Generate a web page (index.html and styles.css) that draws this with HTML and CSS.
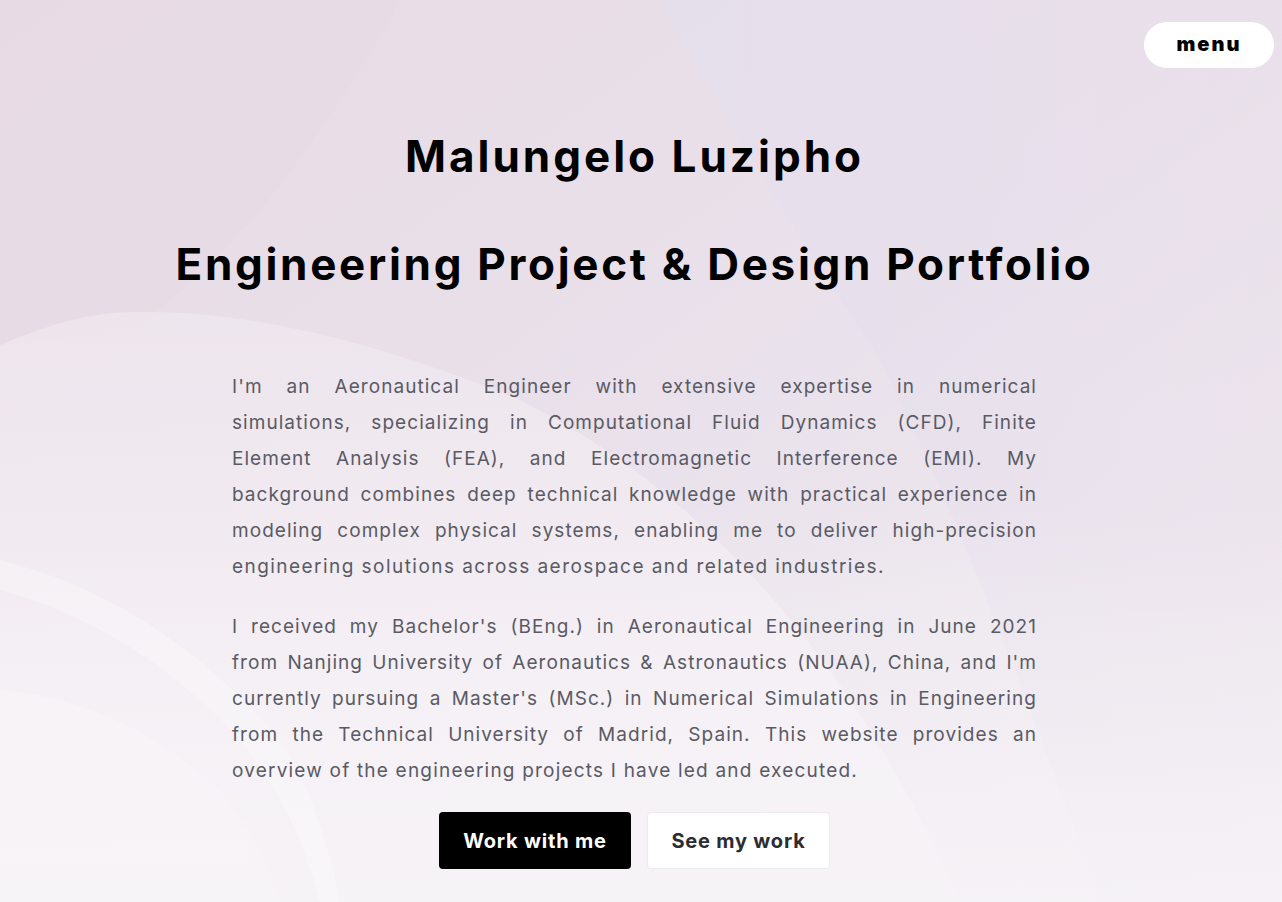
FILE: index.html
```html
<!DOCTYPE html>
<html lang="en">
<head>
<meta charset="utf-8">
<title>Malungelo Luzipho — Portfolio</title>
<link rel="stylesheet" href="styles.css">
</head>
<body>
<div class="page">
  <svg class="bg" viewBox="0 0 1282 902" preserveAspectRatio="none" aria-hidden="true">
    <defs>
      <linearGradient id="base" x1="0" y1="0" x2="1" y2="1">
        <stop offset="0" stop-color="#e8dbe5"/>
        <stop offset="0.5" stop-color="#e9e1eb"/>
        <stop offset="1" stop-color="#f3eef3"/>
      </linearGradient>
      <linearGradient id="tr" x1="0" y1="0" x2="1" y2="0">
        <stop offset="0" stop-color="#e3e0ef" stop-opacity="0.9"/>
        <stop offset="1" stop-color="#e8dde9" stop-opacity="0.7"/>
      </linearGradient>
      <linearGradient id="low" x1="0" y1="0" x2="0" y2="1">
        <stop offset="0" stop-color="#f0e8ef" stop-opacity="0.7"/>
        <stop offset="1" stop-color="#f8f5f8" stop-opacity="0.95"/>
      </linearGradient>
      <linearGradient id="fade" x1="0" y1="0" x2="0" y2="1">
        <stop offset="0" stop-color="#f6f2f6" stop-opacity="0"/>
        <stop offset="1" stop-color="#f6f3f7" stop-opacity="0.9"/>
      </linearGradient>
    </defs>
    <rect width="1282" height="902" fill="url(#base)"/>
    <path d="M400 0 Q340 110 260 210 Q190 290 130 330 L0 345 V0 Z" fill="#e6d9e4" opacity="0.5"/>
    <path d="M660 0 H1282 V902 H1100 Q980 560 880 360 Q740 150 660 0 Z" fill="url(#tr)" opacity="0.55"/>
    <path d="M0 345 Q80 310 140 312 Q300 310 520 400 Q800 540 960 902 H0 Z" fill="url(#low)"/>
    <rect x="0" y="500" width="1282" height="402" fill="url(#fade)"/>
    <path d="M0 690 Q120 700 220 790 Q260 840 280 902 H0 Z" fill="#f8f4f7" opacity="0.7"/>
    <path d="M0 560 Q160 600 280 740 Q320 800 340 902 H320 Q290 780 200 700 Q110 620 0 590 Z" fill="#ffffff" opacity="0.25"/>
  </svg>

  <header class="topbar">
    <button class="menu-btn">menu</button>
  </header>

  <main class="hero">
    <h1 class="name">Malungelo Luzipho</h1>
    <h2 class="title">Engineering Project &amp; Design Portfolio</h2>
    <div class="intro">
      <p>
        <span class="ln">I'm an Aeronautical Engineer with extensive expertise in numerical</span>
        <span class="ln">simulations, specializing in Computational Fluid Dynamics (CFD), Finite</span>
        <span class="ln">Element Analysis (FEA), and Electromagnetic Interference (EMI). My</span>
        <span class="ln">background combines deep technical knowledge with practical experience in</span>
        <span class="ln">modeling complex physical systems, enabling me to deliver high-precision</span>
        <span class="ln last">engineering solutions across aerospace and related industries.</span>
      </p>
      <p>
        <span class="ln">I received my Bachelor's (BEng.) in Aeronautical Engineering in June 2021</span>
        <span class="ln">from Nanjing University of Aeronautics &amp; Astronautics (NUAA), China, and I'm</span>
        <span class="ln">currently pursuing a Master's (MSc.) in Numerical Simulations in Engineering</span>
        <span class="ln">from the Technical University of Madrid, Spain. This website provides an</span>
        <span class="ln last tight">overview of the engineering projects I have led and executed.</span>
      </p>
    </div>
    <div class="actions">
      <a class="btn btn-dark" href="#">Work with me</a>
      <a class="btn btn-light" href="#">See my work</a>
    </div>
  </main>
</div>
</body>
</html>
```

FILE: styles.css
```css
* { box-sizing: border-box; }
html, body { margin: 0; padding: 0; }
body {
  font-family: "Inter", "Liberation Sans", sans-serif;
  color: #000;
  background: #ece3ec;
}
.page {
  position: relative;
  width: 100%;
  min-height: 902px;
  overflow: hidden;
}
.bg {
  position: absolute;
  inset: 0;
  width: 100%;
  height: 100%;
  z-index: 0;
}
.topbar {
  position: relative;
  z-index: 1;
  display: flex;
  justify-content: flex-end;
  padding: 22px 8px 0 0;
}
.menu-btn {
  width: 130px;
  height: 46px;
  border: none;
  border-radius: 23px;
  background: #fff;
  font-family: "Inter", sans-serif;
  font-weight: 900;
  font-size: 20px;
  letter-spacing: 2px;
  color: #000;
  padding: 0 0 3px;
}
.hero {
  position: relative;
  z-index: 1;
  display: flex;
  flex-direction: column;
  align-items: center;
  padding: 60px 13px 0 0;
}
.name, .title {
  margin: 0;
  font-family: "Inter", sans-serif;
  font-weight: 700;
  font-size: 44px;
  line-height: 56px;
  letter-spacing: 3px;
  color: #000;
}
.title { margin-top: 52px; letter-spacing: 2.7px; }
.intro {
  width: 805px;
  margin-top: 77px;
  font-family: "Inter", sans-serif;
  font-size: 19px;
  line-height: 36px;
  color: #595a64;
  letter-spacing: 1.05px;
}
.intro p { margin: 0 0 24px; }
.intro p:last-child { margin-bottom: 0; }
.ln {
  display: block;
  text-align: justify;
  text-align-last: justify;
  white-space: nowrap;
}
.ln.last {
  text-align: left;
  text-align-last: left;
  letter-spacing: 1.45px;
}
.ln.last.tight { letter-spacing: 1.2px; }
.actions {
  display: flex;
  gap: 16px;
  margin-top: 23px;
}
.btn {
  display: flex;
  align-items: center;
  justify-content: center;
  height: 57px;
  border-radius: 4px;
  font-family: "Inter", sans-serif;
  font-weight: 700;
  font-size: 20px;
  text-decoration: none;
  letter-spacing: 0.8px;
}
.btn-dark { width: 192px; background: #000; color: #fff; }
.btn-light { width: 183px; background: #fff; color: #2c2c33; border: 1px solid #ececf0; }
```
